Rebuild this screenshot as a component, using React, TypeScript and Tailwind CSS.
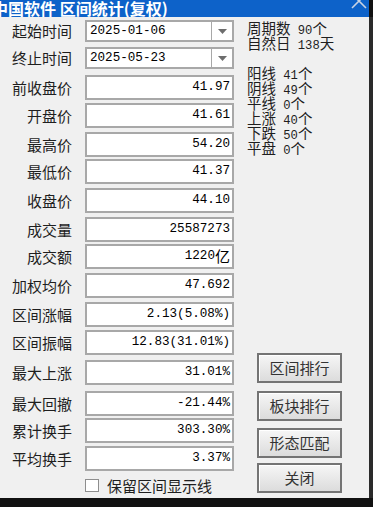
import React from "react";

// 区间统计 dialog (复权)

const rows = [
  { label: "前收盘价", value: "41.97", mt: "mt-[6px]" },
  { label: "开盘价", value: "41.61", mt: "mt-[3px]" },
  { label: "最高价", value: "54.20", mt: "mt-[4px]" },
  { label: "最低价", value: "41.37", mt: "mt-[2px]" },
  { label: "收盘价", value: "44.10", mt: "mt-[4px]" },
  { label: "成交量", value: "25587273", mt: "mt-[4px]" },
  { label: "成交额", value: "1220亿", mt: "mt-[2px]" },
  { label: "加权均价", value: "47.692", mt: "mt-[4px]" },
  { label: "区间涨幅", value: "2.13(5.08%)", mt: "mt-[4px]" },
  { label: "区间振幅", value: "12.83(31.01%)", mt: "mt-[3px]" },
  { label: "最大上涨", value: "31.01%", mt: "mt-[5px]" },
  { label: "最大回撤", value: "-21.44%", mt: "mt-[6px]" },
  { label: "累计换手", value: "303.30%", mt: "mt-[2px]" },
  { label: "平均换手", value: "3.37%", mt: "mt-[3px]" },
];

const info = ["周期数 90个", "自然日 138天", "", "阳线 41个", "阴线 49个", "平线 0个", "上涨 40个", "下跌 50个", "平盘 0个"];

const buttons = [
  { label: "区间排行", mt: "mt-0" },
  { label: "板块排行", mt: "mt-[8px]" },
  { label: "形态匹配", mt: "mt-[7px]" },
  { label: "关闭", mt: "mt-[5px]" },
];

// latin runs get the narrow mono face, CJK runs stay on Noto
function Txt({ s }: { s: string }) {
  const parts = s.match(/[\u2E80-\uFFFF]+|[^\u2E80-\uFFFF]+/g) ?? [];
  return (
    <>
      {parts.map((p, i) =>
        /[\u2E80-\uFFFF]/.test(p) ? (
          <span key={i}>{p}</span>
        ) : (
          <span key={i} className="font-['Liberation_Mono',monospace] text-[0.84em] whitespace-pre">
            {p}
          </span>
        )
      )}
    </>
  );
}

function Combo({ value }: { value: string }) {
  return (
    <div className="flex h-[22px] w-[149px] border-2 border-[#a8a8a8] bg-white">
      <div className="flex flex-1 items-center pl-[3px] text-[15px] text-black">
        <Txt s={value} />
      </div>
      <div className="flex w-[21px] items-center justify-center border-l border-[#a8a8a8]">
        <svg width="9" height="5" viewBox="0 0 9 5">
          <path d="M0 0 H9 L4.5 5 Z" fill="#6d6d6d" />
        </svg>
      </div>
    </div>
  );
}

export default function App() {
  return (
    <div className="relative h-[507px] w-[373px] overflow-hidden bg-[#111] font-['Noto_Sans_CJK_SC',sans-serif]">
      <div className="flex h-[498px] w-[369px] flex-col bg-[#f0f0f0]">
        {/* title bar */}
        <div className="relative h-[17px] shrink-0 overflow-hidden bg-[#0d62c9]">
          <div className="-ml-[8px] whitespace-nowrap text-[16px] font-bold leading-[16px] text-white">
            中国软件 区间统计(复权)
          </div>
          <svg className="absolute right-[1px] top-0" width="18" height="10" viewBox="0 0 18 10">
            <path d="M2 -6 L16 8 M16 -6 L2 8" stroke="#c9d3e3" strokeWidth="1.6" />
          </svg>
        </div>

        <div className="flex flex-1">
          {/* left: fields */}
          <div className="flex flex-col pt-[3px]">
            <div className="flex items-center">
              <div className="w-[72px] text-right text-[15px] leading-[22px] text-[#1e1e1e]">起始时间</div>
              <div className="ml-[13px]">
                <Combo value="2025-01-06" />
              </div>
            </div>
            <div className="mt-[5px] flex items-center">
              <div className="w-[72px] text-right text-[15px] leading-[22px] text-[#1e1e1e]">终止时间</div>
              <div className="ml-[13px]">
                <Combo value="2025-05-23" />
              </div>
            </div>
            {rows.map((r) => (
              <div key={r.label} className={`${r.mt} flex items-center`}>
                <div className="w-[72px] text-right text-[15px] leading-[25px] text-[#1e1e1e]">{r.label}</div>
                <div className="ml-[13px] flex h-[25px] w-[149px] items-center justify-end border-2 border-[#a8a8a8] bg-white pr-[2px] text-[15px] text-black">
                  <Txt s={r.value} />
                </div>
              </div>
            ))}
            <div className="ml-[85px] mt-[8px] flex items-center">
              <div className="h-[13px] w-[14px] border border-[#8e8e8e] bg-white" />
              <div className="ml-[8px] text-[15px] leading-[13px] text-[#1e1e1e]">保留区间显示线</div>
            </div>
          </div>

          {/* right: counts + actions */}
          <div className="ml-[13px] flex flex-1 flex-col pb-[5px] pt-[3px]">
            <div className="flex flex-col text-[14.5px] leading-[15px] text-[#1e1e1e]">
              {info.map((line, i) => (
                <div key={i} className="h-[15px] whitespace-pre">
                  <Txt s={line} />
                </div>
              ))}
            </div>
            <div className="mt-auto ml-[10px] flex flex-col">
              {buttons.map((b) => (
                <button
                  key={b.label}
                  className={`${b.mt} h-[30px] w-[85px] border-2 border-[#747474] bg-gradient-to-b from-[#f6f6f6] to-[#dcdcdc] text-[15px] leading-[26px] text-[#333] shadow-[inset_1px_1px_0_#ffffff]`}
                >
                  {b.label}
                </button>
              ))}
            </div>
          </div>
        </div>
      </div>
      <div className="absolute right-0 top-[17px] h-[481px] w-[4px] bg-[#2a2a2a]" />
    </div>
  );
}
